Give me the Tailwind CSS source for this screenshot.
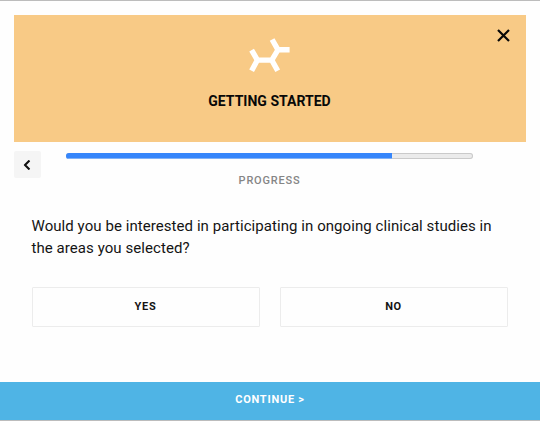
<!DOCTYPE html>
<html lang="en">
<head>
<meta charset="utf-8">
<title>Getting Started</title>
<script src="https://cdn.jsdelivr.net/npm/@tailwindcss/browser@4"></script>
</head>
<body class="bg-[#fefefe] font-['Roboto',sans-serif] text-[#141414]">
<div class="flex h-[421px] w-[540px] flex-col overflow-hidden border-t border-b border-[#bcbcbc]">
  <header class="relative ml-[13.5px] mt-[14px] flex h-[127px] w-[512px] shrink-0 flex-col items-center bg-[#f8ca86]">
    <svg class="mt-[22px] h-[37px] w-[44px] -translate-x-[0.8px]" viewBox="0 0 44 37" fill="none" stroke="#fff" stroke-width="5.4"><path d="M4.4 13.1L10.2 23.1L4.4 33.8M10.2 23.1H24.6L30.5 33.8M24.6 23.1L30.8 12.8L24.9 2.5M30.8 12.8H42.4"/></svg>
    <h1 class="mt-[17px] text-[14px] leading-5 font-bold tracking-[0.02px] whitespace-nowrap text-[#080808]">GETTING STARTED</h1>
    <button class="absolute top-[14px] right-[16px]" aria-label="Close"><svg class="h-[13px] w-[13px]" viewBox="0 0 13 13" fill="none" stroke="#080808" stroke-width="2.2"><path d="M1 1L12 12M12 1L1 12"/></svg></button>
  </header>
  <div class="flex h-[48px] shrink-0 pl-[13.5px]">
    <button class="mt-[9px] flex h-[27px] w-[27px] items-center justify-center rounded-[2px] bg-[#f5f5f5]" aria-label="Back"><svg class="h-[10px] w-[7px] -translate-x-[0.5px]" viewBox="0 0 7 10" fill="none" stroke="#111" stroke-width="2.1"><path d="M6 .5L1.5 5L6 9.5"/></svg></button>
    <div class="ml-[25.5px] flex w-[407px] flex-col pt-[11px]">
      <div class="h-[6px] overflow-hidden rounded-full bg-[#ebebeb] shadow-[inset_0_0_0_1px_#cacaca]"><div class="h-[6px] w-[326px] border-b border-[#82b2f6] bg-[#3686fb]"></div></div>
      <p class="mt-[14px] text-center text-[11px] leading-[16px] font-medium tracking-[0.8px] text-[#858585]">PROGRESS</p>
    </div>
  </div>
  <main class="px-[31.5px] pt-[26px]">
    <p class="text-[15px] leading-[21.5px] tracking-[0.065px] whitespace-nowrap">Would you be interested in participating in ongoing clinical studies in<br>the areas you selected?</p>
    <div class="mt-[28px] flex gap-[20px]">
      <button class="h-[40px] w-[228px] rounded-[1px] border border-[#ececec] text-[11px] font-bold tracking-[0.7px]">YES</button>
      <button class="h-[40px] w-[228px] rounded-[1px] border border-[#ececec] text-[11px] font-bold tracking-[0.7px]">NO</button>
    </div>
  </main>
  <button class="mt-auto h-[38px] w-full shrink-0 bg-[#4fb4e5] pb-px text-[11px] font-bold tracking-[0.75px] text-white">CONTINUE &gt;</button>
</div>
</body>
</html>
